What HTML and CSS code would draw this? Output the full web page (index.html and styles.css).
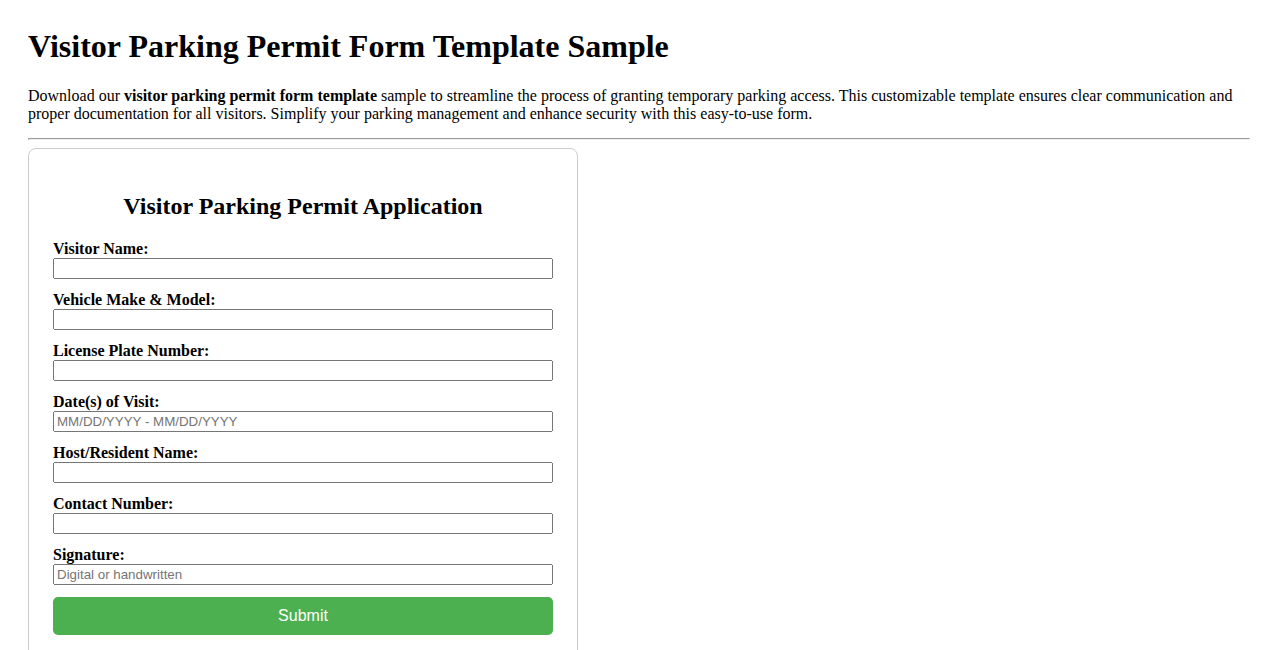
FILE: index.html
```html
<!DOCTYPE html>
<html lang="en">
<head>
<meta charset="utf-8">
<title>Visitor Parking Permit Form Template Sample</title>
<link rel="stylesheet" href="styles.css">
</head>
<body>
<h1 class="title">Visitor Parking Permit Form Template Sample</h1>
<p class="intro">Download our <strong>visitor parking permit form template</strong> sample to streamline the process of granting temporary parking access. This customizable template ensures clear communication and proper documentation for all visitors. Simplify your parking management and enhance security with this easy-to-use form.</p>
<hr class="divider">
<div class="card">
  <h2 class="card-title">Visitor Parking Permit Application</h2>
  <form class="form">
    <label class="label" for="vn">Visitor Name:</label>
    <input class="field" id="vn" type="text">
    <label class="label" for="vm">Vehicle Make &amp; Model:</label>
    <input class="field" id="vm" type="text">
    <label class="label" for="lp">License Plate Number:</label>
    <input class="field" id="lp" type="text">
    <label class="label" for="dv">Date(s) of Visit:</label>
    <input class="field" id="dv" type="text" placeholder="MM/DD/YYYY - MM/DD/YYYY">
    <label class="label" for="hr">Host/Resident Name:</label>
    <input class="field" id="hr" type="text">
    <label class="label" for="cn">Contact Number:</label>
    <input class="field" id="cn" type="text">
    <label class="label" for="sg">Signature:</label>
    <input class="field" id="sg" type="text" placeholder="Digital or handwritten">
    <button class="submit" type="submit">Submit</button>
  </form>
</div>
</body>
</html>
```
FILE: styles.css
```css
body {
  margin: 8px;
  padding: 20px;
  font-family: "Liberation Serif", "Times New Roman", serif;
  color: #000;
  background: #fff;
}
.title {
  font-size: 32px;
  margin: 0 0 22px;
}
.intro {
  font-size: 16px;
  margin: 22px 0 15px;
}
.divider {
  margin: 8px 0;
}
.card {
  width: 500px;
  padding: 24px;
  border: 1px solid #ccc;
  border-radius: 8px;
}
.card-title {
  text-align: center;
  font-size: 24px;
  margin: 20px 0;
}
.form {
  display: flex;
  flex-direction: column;
}
.label {
  font-weight: bold;
  font-size: 16px;
}
.field {
  height: 21px;
  box-sizing: border-box;
  margin: 0 0 12px;
  font-family: "Liberation Sans", Arial, sans-serif;
  font-size: 13.33px;
}
.submit {
  height: 38px;
  background: #4caf50;
  color: #fff;
  border: none;
  border-radius: 5px;
  font-family: "Liberation Sans", Arial, sans-serif;
  font-size: 16px;
}
```
